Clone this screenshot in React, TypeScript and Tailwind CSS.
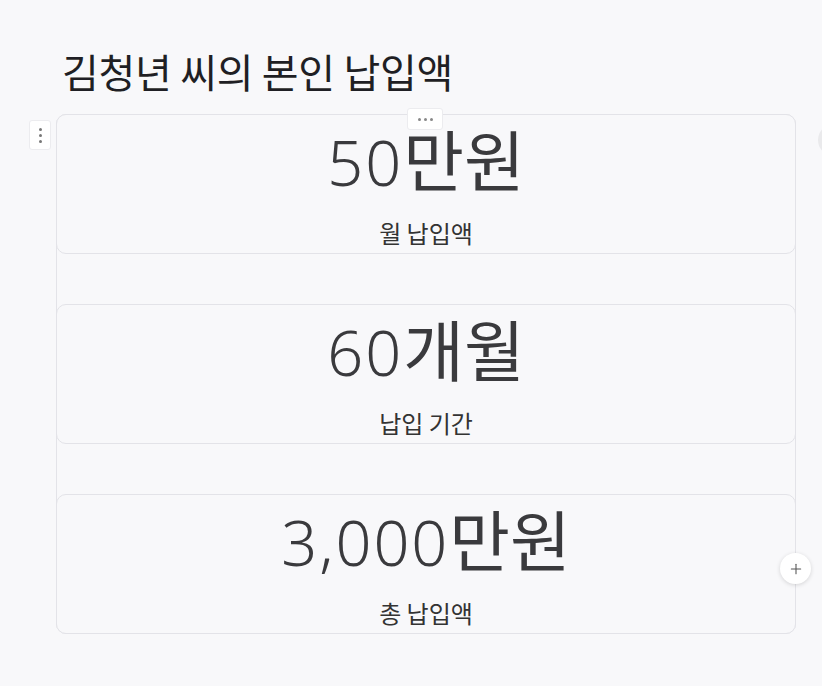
import { Plus } from 'lucide-react'

const stats = [
  { value: '50', unit: '만원', label: '월 납입액' },
  { value: '60', unit: '개월', label: '납입 기간' },
  { value: '3,000', unit: '만원', label: '총 납입액' },
]

export default function App() {
  return (
    <div className="relative w-[822px] h-[686px] overflow-hidden bg-[#f8f8fa] font-['Noto_Sans','Noto_Sans_CJK_KR',sans-serif]">
      <h1 className="pl-[62px] pt-[46px] text-[40px] leading-[50px] text-[#1f1f24] tracking-[-0.3px] font-['Noto_Sans_CJK_KR',sans-serif]">
        김청년 씨의 본인 납입액
      </h1>

      <div className="relative ml-[56px] mt-[18px] w-[740px] rounded-[10px] border border-[#e3e3e8]">
        {/* block handle */}
        <div className="absolute -left-[28px] top-[5px] flex h-[30px] w-[22px] flex-col items-center justify-center gap-[3px] rounded-[3px] border border-[#ececef] bg-white">
          <span className="h-[3px] w-[3px] rounded-full bg-[#777]" />
          <span className="h-[3px] w-[3px] rounded-full bg-[#777]" />
          <span className="h-[3px] w-[3px] rounded-full bg-[#777]" />
        </div>
        {/* more menu */}
        <div className="absolute left-[350px] -top-[7px] z-10 flex h-[22px] w-[36px] items-center justify-center gap-[3px] rounded-[3px] border border-[#ececef] bg-white">
          <span className="h-[3px] w-[3px] rounded-full bg-[#888]" />
          <span className="h-[3px] w-[3px] rounded-full bg-[#888]" />
          <span className="h-[3px] w-[3px] rounded-full bg-[#888]" />
        </div>

        <div className="flex flex-col gap-[50px] -m-px">
          {stats.map((s) => (
            <div
              key={s.label}
              className="flex h-[140px] flex-col items-center rounded-[10px] border border-[#e3e3e8] bg-[#f8f8fa]"
            >
              <div className="mt-[7px] flex items-baseline leading-[70px] text-[#3a3a3d]">
                <span className="text-[63px] font-light tracking-[2px]">{s.value}</span>
                <span className="text-[66px] font-['Noto_Sans_CJK_KR',sans-serif]">{s.unit}</span>
              </div>
              <div className="mt-[20px] text-[24px] leading-[32px] text-[#333] font-['Noto_Sans_CJK_KR',sans-serif]">
                {s.label}
              </div>
            </div>
          ))}
        </div>

        {/* add button */}
        <div className="absolute -right-[16px] top-[438px] flex h-[31px] w-[31px] items-center justify-center rounded-full bg-white shadow-[0_1px_4px_rgba(0,0,0,0.15)]">
          <Plus size={16} strokeWidth={1.6} className="text-[#555]" />
        </div>
      </div>

      {/* clipped side button */}
      <div className="absolute left-[818px] top-[124px] h-[32px] w-[32px] rounded-full bg-[#eaeaec]" />
    </div>
  )
}
